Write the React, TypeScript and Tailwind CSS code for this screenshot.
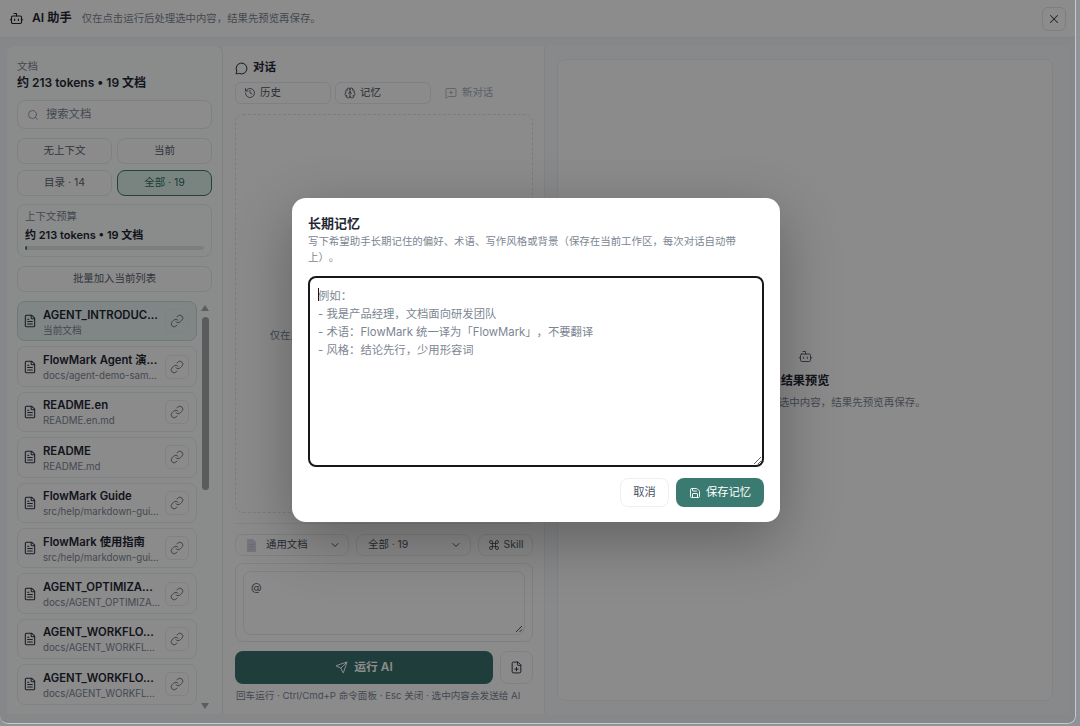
import {
  Bot,
  Brain,
  ChevronDown,
  Command,
  FilePlus,
  FileText,
  History,
  Link,
  MessageCircle,
  MessageSquarePlus,
  Save,
  Search,
  Send,
  X,
} from "lucide-react";

const docs = [
  { title: "AGENT_INTRODUC...", path: "当前文档", active: true },
  { title: "FlowMark Agent 演...", path: "docs/agent-demo-sam..." },
  { title: "README.en", path: "README.en.md" },
  { title: "README", path: "README.md" },
  { title: "FlowMark Guide", path: "src/help/markdown-gui..." },
  { title: "FlowMark 使用指南", path: "src/help/markdown-gui..." },
  { title: "AGENT_OPTIMIZA...", path: "docs/AGENT_OPTIMIZA..." },
  { title: "AGENT_WORKFLO...", path: "docs/AGENT_WORKFL..." },
  { title: "AGENT_WORKFLO...", path: "docs/AGENT_WORKFL..." },
];

const placeholder = `例如：
- 我是产品经理，文档面向研发团队
- 术语：FlowMark 统一译为「FlowMark」，不要翻译
- 风格：结论先行，少用形容词`;

function ChipButton({ label, active }: { label: string; active?: boolean }) {
  return (
    <button
      className={
        active
          ? "h-[26px] rounded-lg border border-[#3b7a70] bg-[#dcefe9] text-[10.5px] text-[#2f6f64]"
          : "h-[26px] rounded-lg border border-[#e6e9ec] bg-[#fdfdfe] text-[10.5px] text-[#5b6470]"
      }
    >
      {label}
    </button>
  );
}

function DocRow({ title, path, active }: { title: string; path: string; active?: boolean }) {
  return (
    <div
      className={
        active
          ? "flex h-[40.4px] shrink-0 items-center rounded-lg border border-[#c5e0d9] bg-[#eaf5f2] pl-[5px] pr-[7px]"
          : "flex h-[40.4px] shrink-0 items-center rounded-lg border border-[#e8ebee] bg-[#fdfdfe] pl-[5px] pr-[7px]"
      }
    >
      <FileText className="h-3.5 w-3.5 shrink-0 text-[#2c3440]" strokeWidth={1.8} />
      <div className="ml-[6px] mt-[3px] min-w-0 flex-1 overflow-hidden whitespace-nowrap">
        <div className="text-[11.3px] font-semibold leading-[15px] text-[#1f2733]">{title}</div>
        <div className="text-[9.7px] leading-[15px] text-[#7c8692]">{path}</div>
      </div>
      <div className="flex h-6 w-6 shrink-0 items-center justify-center rounded-md border border-[#e8ebee]">
        <Link className="h-3.5 w-3.5 text-[#5b6470]" strokeWidth={1.4} />
      </div>
    </div>
  );
}

function ToolButton({ icon, label, muted, width }: { icon: React.ReactNode; label: string; muted?: boolean; width: string }) {
  return (
    <div
      className={
        muted
          ? `flex h-[22px] items-center gap-[5px] rounded-md pl-[10px] text-[10.4px] text-[#a6adb5] ${width}`
          : `flex h-[22px] items-center gap-[4px] rounded-md border border-[#e6e9ec] pl-[8px] text-[10.4px] text-[#4b5563] ${width}`
      }
    >
      {icon}
      {label}
    </div>
  );
}

export default function App() {
  return (
    <div className="relative h-[726px] w-[1080px] overflow-hidden bg-[#8f9397] font-['Inter','Noto_Sans_CJK_SC',sans-serif] [text-spacing-trim:space-all]">
      <div className="relative flex h-[724px] w-[1076px] flex-col overflow-hidden rounded-b-lg bg-[#f2f6f8]">
        <header className="flex h-[38px] shrink-0 items-center border-b border-[#eceff1] bg-white pl-[9px] pr-[10px]">
          <Bot className="h-[15px] w-[15px] text-[#1f2733]" strokeWidth={1.8} />
          <span className="ml-[8px] text-[12.2px] font-semibold text-[#1f2733]">AI 助手</span>
          <span className="ml-[10px] text-[10.4px] text-[#7c8692]">仅在点击运行后处理选中内容，结果先预览再保存。</span>
          <div className="ml-auto flex h-6 w-6 items-center justify-center rounded-md border border-[#e3e6ea]">
            <X className="h-[14px] w-[14px] text-[#3b4552]" strokeWidth={1.8} />
          </div>
        </header>

        <div className="flex min-h-0 flex-1 px-[7px] pb-[10px] pt-[8px]">
          <aside className="flex w-[216px] shrink-0 flex-col overflow-hidden rounded-t-lg border-r border-[#e6e9ec] bg-[#fcfdfd] pl-[10px] pr-[10px] pt-[13px]">
            <div className="text-[10.4px] leading-[15px] text-[#7c8692]">文档</div>
            <div className="text-[12px] font-semibold leading-[18px] text-[#1f2733]">约 213 tokens • 19 文档</div>
            <div className="mt-[8px] flex h-[29px] shrink-0 items-center rounded-lg border border-[#e6e9ec] bg-white pl-[9px] text-[11.3px] text-[#7c8692]">
              <Search className="h-3 w-3" strokeWidth={1.6} />
              <span className="ml-[7px]">搜索文档</span>
            </div>
            <div className="mt-[9px] grid shrink-0 grid-cols-2 gap-x-[5px] gap-y-[6px]">
              <ChipButton label="无上下文" />
              <ChipButton label="当前" />
              <ChipButton label="目录 · 14" />
              <ChipButton label="全部 · 19" active />
            </div>
            <div className="mt-[8px] h-[53px] shrink-0 rounded-lg border border-[#e8ebee] px-[7px] pt-[5px]">
              <div className="text-[10.4px] leading-[14px] text-[#7c8692]">上下文预算</div>
              <div className="mt-[4px] text-[11px] font-semibold leading-[15px] text-[#1f2733]">约 213 tokens • 19 文档</div>
              <div className="mt-[3px] h-1 overflow-hidden rounded-full bg-[#e3e6ea]">
                <div className="h-full w-[2px] bg-[#3b7a70]" />
              </div>
            </div>
            <button className="mt-[9px] h-[26px] shrink-0 rounded-lg border border-[#e6e9ec] bg-[#fdfdfe] text-[10.4px] text-[#5b6470]">
              批量加入当前列表
            </button>
            <div className="mt-[9px] flex min-h-0 flex-1 gap-[4px] pr-[3px]">
              <div className="flex min-w-0 flex-1 flex-col gap-[5px] overflow-hidden">
                {docs.map((d, i) => (
                  <DocRow key={i} title={d.title} path={d.path} active={d.active} />
                ))}
              </div>
              <div className="flex w-[8px] shrink-0 flex-col items-center">
                <div className="mt-[4px] h-0 w-0 border-x-[4px] border-b-[6px] border-x-transparent border-b-[#a8aaad]" />
                <div className="mt-[6px] h-[173px] w-[7px] rounded-full bg-[#a4a6a9]" />
                <div className="mb-[5px] mt-auto h-0 w-0 border-x-[4px] border-t-[6px] border-x-transparent border-t-[#a8aaad]" />
              </div>
            </div>
          </aside>

          <section className="flex w-[322px] shrink-0 flex-col border-r border-[#eceff1] bg-[#fdfdfe] pl-[12px] pr-[11px] pt-[14px]">
            <div className="flex h-4 items-center gap-[5px] text-[11.5px] font-semibold text-[#1f2733]">
              <MessageCircle className="h-[13px] w-[13px]" strokeWidth={1.8} />
              对话
            </div>
            <div className="mt-[6px] flex gap-[4px]">
              <ToolButton width="w-[96px]" label="历史" icon={<History className="h-3 w-3" strokeWidth={1.7} />} />
              <ToolButton width="w-[96px]" label="记忆" icon={<Brain className="h-3 w-3" strokeWidth={1.7} />} />
              <ToolButton width="w-[70px]" muted label="新对话" icon={<MessageSquarePlus className="h-3 w-3" strokeWidth={1.7} />} />
            </div>
            <div className="mt-[10px] flex h-[399px] shrink-0 items-center justify-center rounded-lg border border-dashed border-[#dfe3e7] pt-[44px] text-[10.4px] text-[#7c8692]">
              仅在点击运行后才会处理选中内容，结果再保存。
            </div>
            <div className="mt-[10px] border-t border-[#eceff1] pt-[10px] text-[10.4px] text-[#4b5563]">
              <div className="flex h-[22px] gap-[7px]">
                <div className="flex w-[114px] items-center rounded-lg border border-[#e6e9ec] pl-[10px] pr-[7px]">
                  <svg viewBox="0 0 12 14" className="h-[13px] w-[11px]">
                    <path d="M1 0h6.5L11 3.5V14H1z" fill="#d6d6e6" />
                    <path d="M3 6h6M3 8.5h6M3 11h6" stroke="#bfbfd2" strokeWidth="1" />
                  </svg>
                  <span className="ml-[9px]">通用文档</span>
                  <ChevronDown className="ml-auto h-3 w-3" strokeWidth={2} />
                </div>
                <div className="flex w-[115px] items-center rounded-lg border border-[#e6e9ec] pl-[11px] pr-[8px]">
                  全部 · 19
                  <ChevronDown className="ml-auto h-3 w-3" strokeWidth={2} />
                </div>
                <div className="flex w-[55px] items-center justify-center gap-[4px] rounded-lg border border-[#e6e9ec]">
                  <Command className="h-3 w-3" strokeWidth={1.8} />
                  Skill
                </div>
              </div>
              <div className="mt-[7px] h-[79px] rounded-lg border border-[#e6e9ec] p-[7px]">
                <div className="relative h-[64px] rounded-lg border border-[#e6e9ec] px-[7px] py-[8px] text-[11px] leading-[14px] text-[#5b6470]">
                  @
                  <svg viewBox="0 0 8 8" className="absolute bottom-[1px] right-[1px] h-2 w-2 text-[#4b5563]">
                    <path d="M1 7 7 1M4.5 7 7 4.5" stroke="currentColor" strokeWidth="1" />
                  </svg>
                </div>
              </div>
              <div className="mt-[9px] flex h-[33px] gap-[7px]">
                <div className="flex flex-1 items-center justify-center gap-[6px] rounded-lg bg-[#386f6c] text-[11.8px] font-semibold text-white">
                  <Send className="h-[13px] w-[13px]" strokeWidth={1.8} />
                  运行 AI
                </div>
                <div className="flex w-[33px] items-center justify-center rounded-lg border border-[#e6e9ec]">
                  <FilePlus className="h-[13px] w-[13px] text-[#2c3440]" strokeWidth={1.8} />
                </div>
              </div>
              <div className="mt-[4px] whitespace-nowrap pl-px text-[9.6px] leading-[15px] text-[#7c8692]">
                回车运行 · Ctrl/Cmd+P 命令面板 · Esc 关闭 · 选中内容会发送给 AI
              </div>
            </div>
          </section>

          <section className="flex min-w-0 flex-1 bg-[#f8fafb] pb-[13px] pl-[12px] pr-[16px] pt-[13px]">
            <div className="flex flex-1 flex-col items-center justify-center rounded-lg border border-[#eceff1] bg-[#fdfdfe]">
              <Bot className="h-[15px] w-[15px] text-[#5b6470]" strokeWidth={1.6} />
              <div className="mt-[8px] text-[12.2px] font-semibold leading-[18px] text-[#1f2733]">结果预览</div>
              <div className="mt-[5px] text-[10.5px] leading-[16px] text-[#7c8692]">仅在点击运行后处理选中内容，结果先预览再保存。</div>
            </div>
          </section>
        </div>

        <div className="absolute inset-0 flex items-center justify-center bg-black/45 pb-[4px] pr-[4px]">
          <div className="flex h-[324px] w-[488px] flex-col rounded-[14px] bg-white p-4 shadow-[0_18px_60px_rgba(0,0,0,0.3)]">
            <h2 className="text-[13px] font-bold leading-[18px] text-[#1f2733]">长期记忆</h2>
            <p className="mt-[2px] text-[10.45px] leading-[16px] text-[#7c8692]">
              写下希望助手长期记住的偏好、术语、写作风格或背景（保存在当前工作区，每次对话自动带上）。
            </p>
            <div className="relative mt-[10px] h-[191px] shrink-0">
              <textarea
                placeholder={placeholder}
                className="h-full w-full rounded-lg border-2 border-[#18181b] px-[8px] py-[9px] text-[11.33px] leading-[18px] text-[#1f2733] outline-none placeholder:text-[#7c8692]"
              />
              <div className="absolute left-[10px] top-[12px] h-[13px] w-px bg-[#18181b]" />
            </div>
            <div className="mt-[11px] flex justify-end gap-[7px]">
              <button className="h-[29px] w-[49px] rounded-lg border border-[#eceff1] bg-white text-[11.3px] text-[#4b5563]">
                取消
              </button>
              <button className="flex h-[29px] w-[88px] items-center justify-center gap-[5px] rounded-lg bg-[#3b7a70] text-[11.3px] text-white">
                <Save className="h-3 w-3" strokeWidth={1.8} />
                保存记忆
              </button>
            </div>
          </div>
        </div>
        <div className="pointer-events-none absolute inset-0 rounded-b-lg border-b border-r border-[#c3c9ce]" />
      </div>
    </div>
  );
}
